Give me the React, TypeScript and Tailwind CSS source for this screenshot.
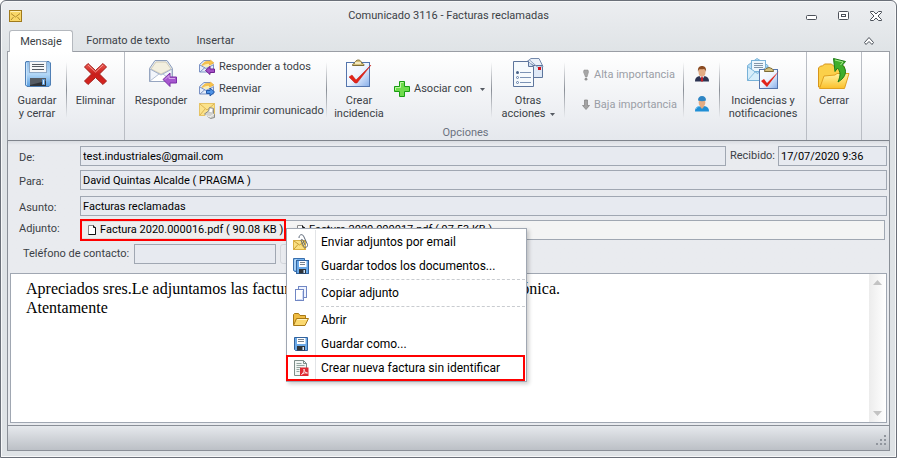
import type { ReactNode } from "react";

/* ---------- Iconos grandes (32px) ---------- */

function FloppyShape() {
  return (
    <>
      <path d="M5 3.500h23l1.500 1.500v22L28 28.500H6L4.500 27V4z" fill="url(#floppyBlue)" stroke="#4f7fb5" />
      <path d="M5.500 5v22" stroke="#c9e3fa" strokeWidth="1" />
      <rect x="8.500" y="3.500" width="17" height="11" fill="#f6f7f9" stroke="#8fa9c6" />
      <path d="M11 6.500h12M11 8.500h12M11 11.500h12" stroke="#555b63" />
      <rect x="9" y="20" width="16" height="8" fill="#2f3338" />
      <path d="M9 20h16v3L9 27z" fill="#555b63" />
      <rect x="21.500" y="21.500" width="2" height="5" fill="#d8ecff" stroke="#5f9bd8" />
    </>
  );
}

function SaveIcon() {
  return (
    <svg viewBox="0 0 32 32" className="size-8">
      <defs>
        <linearGradient id="floppyBlue" x1="0" y1="0" x2="0" y2="1">
          <stop offset="0" stopColor="#8fbce8" />
          <stop offset="0.500" stopColor="#b4d8f7" />
          <stop offset="1" stopColor="#5a9ee0" />
        </linearGradient>
      </defs>
      <FloppyShape />
    </svg>
  );
}

function DeleteIcon() {
  return (
    <svg viewBox="0 0 32 32" className="size-8">
      <defs>
        <linearGradient id="redCross" x1="0" y1="0" x2="0" y2="1">
          <stop offset="0" stopColor="#ee5a52" />
          <stop offset="0.500" stopColor="#c81e1a" />
          <stop offset="1" stopColor="#d8241f" />
        </linearGradient>
      </defs>
      <path
        d="M8 5.500l7.500 7L23 5.500l3.500 3.500-7 7 7 7L23 26.500l-7.500-7-7.500 7L4.500 23l7-7-7-7z"
        fill="url(#redCross)"
        stroke="#a31c18"
        strokeLinejoin="round"
      />
      <path d="M8 7l7.500 7L23 7" fill="none" stroke="#f59b95" />
    </svg>
  );
}

function ReplyIcon() {
  return (
    <svg viewBox="0 0 32 32" className="size-8">
      <path d="M4.500 10.500L10 2.500h12l5.500 8v13h-23z" fill="#e6ecf5" stroke="#8a9bb8" />
      <path d="M6 11l5-7h10l5 7-10 5z" fill="#f3efdf" stroke="#d3cdb8" />
      <path d="M5 11l11 6 11-6v12H5z" fill="#f2f5fb" stroke="#a2b0c8" />
      <path d="M5 23l9-7 2 1 2-1 9 7" fill="#fff" stroke="#b3bfd3" />
      <path d="M18 21.500l7-6.500v4h6.500v6H25v3.500z" fill="#a657cf" stroke="#7b2fa6" />
      <path d="M20 21.500l4-4v3h6" fill="none" stroke="#d6a8ec" />
    </svg>
  );
}

function ClipboardIcon() {
  return (
    <svg viewBox="0 0 32 32" className="size-8">
      <defs>
        <linearGradient id="paper" x1="0" y1="0" x2="1" y2="1">
          <stop offset="0" stopColor="#ffffff" />
          <stop offset="0.500" stopColor="#eef4ff" />
          <stop offset="1" stopColor="#86aeea" />
        </linearGradient>
      </defs>
      <rect x="3.500" y="4.500" width="23" height="24" fill="url(#paper)" stroke="#5475ad" />
      <path d="M9.500 7.500c0-2 1.500-2 2.500-2.500C12.500 1 18 1 18.500 5c1 .5 2.500.5 2.500 2.500z" fill="#d5c07b" stroke="#7d6b35" />
      <rect x="12" y="4" width="6" height="2" fill="#f3e9bf" />
      <path d="M6 19l3-2 4 5L28 7 14 25h-2z" fill="#e2231a" stroke="#c21810" strokeWidth=".5" strokeLinejoin="round" />
    </svg>
  );
}

function DocsIcon() {
  return (
    <svg viewBox="0 0 32 32" className="size-8">
      <path d="M15 3.500L19 .5h8l4 8-4 2z" fill="#eaf1fa" stroke="#7489ab" />
      <path d="M17.500 7.500h13v12h-13z" fill="#dfe9f6" stroke="#5d759c" />
      <path d="M17 1.500l9 8 5-1" fill="none" stroke="#8ba0c0" />
      <rect x="26" y="9" width="3" height="3" fill="#d4101c" />
      <path d="M1.500 3.500h15l5 5v20h-20z" fill="#f6fafd" stroke="#5d759c" />
      <path d="M16.500 3.500v5h5" fill="#cfdff2" stroke="#5d759c" />
      <path d="M8 14.500h11M8 19.500h11M8 24.500h11" stroke="#7c93b5" />
      <circle cx="5.500" cy="14.500" r="1.500" fill="#4a6388" />
      <circle cx="5.500" cy="19.500" r="1" fill="#fff" stroke="#5f7ba5" />
      <circle cx="5.500" cy="24.500" r="1" fill="#fff" stroke="#5f7ba5" />
    </svg>
  );
}

function NotificationsIcon() {
  return (
    <svg viewBox="0 0 32 32" className="size-8">
      <path d="M.5 7.500L10 .5l11 7v15H.5z" fill="#b9def5" stroke="#78b2d8" />
      <rect x="4.500" y="2.500" width="14" height="11" fill="#edf7fd" stroke="#78b2d8" />
      <path d="M7 5.500h9M7 7.500h9M7 9.500h9" stroke="#8396a8" />
      <path d="M.5 8.500l10 7 10-7v14H.5z" fill="#d7eefb" stroke="#78b2d8" />
      <path d="M1 22l7-8M20 22l-7-8" stroke="#8ec2e2" />
      <rect x="12.500" y="11.500" width="18" height="19" fill="url(#paper)" stroke="#5475ad" />
      <path d="M17.500 13.500c0-3 2-3 4.500-4 2.500 1 4.500 1 4.500 4z" fill="#d5c07b" stroke="#7d6b35" />
      <path d="M14 23l3-2 3 4L32 13 20 29z" fill="#e2231a" />
    </svg>
  );
}

function CloseFolderIcon() {
  return (
    <svg viewBox="0 0 32 32" className="size-8">
      <defs>
        <linearGradient id="folder" x1="0" y1="0" x2="0" y2="1">
          <stop offset="0" stopColor="#fff3a0" />
          <stop offset="1" stopColor="#fbc02a" />
        </linearGradient>
      </defs>
      <path d="M.5 29V10l2-2h2l2-2h7l2 2h10l1 1v20H2z" fill="#fbd04a" stroke="#d7951a" />
      <path d="M1.500 30.500L6 18l11-1 2-1.500h12L26.500 30.500z" fill="url(#folder)" stroke="#e0a01f" />
      <path d="M15.500.5l12 3-3 3.500c5 5 4 12-4.500 17 2.500-6 3-10-.5-14L17 13.500z" fill="#3fae2b" stroke="#1d7a16" />
      <path d="M17 2l8 2-2.500 3" fill="none" stroke="#a9ea8c" />
    </svg>
  );
}

/* ---------- Iconos pequeños (16px) ---------- */

function MailIcon() {
  return (
    <svg viewBox="0 0 14 12" className="h-3 w-3.5">
      <rect x=".5" y=".5" width="12" height="11" fill="#f9d768" stroke="#a07a1c" />
      <path d="M2 3.500l4.500 3.500L11 3.500M2 10l2.500-3M11 10L8.500 7" fill="none" stroke="#b28b2c" />
      <path d="M1.500 1.500h10" stroke="#fff0b8" />
    </svg>
  );
}

function OpenMail({ arrow }: { arrow: ReactNode }) {
  return (
    <svg viewBox="0 0 16 16" className="size-4 shrink-0">
      <path d="M.5 5.500L5 1.500h6l3.500 4v7.500H.5z" fill="#e5edfa" stroke="#7b92c4" />
      <path d="M2 6l4-3.500h4.500L13 6 8 8.500z" fill="#fdeeb0" />
      <path d="M1 13l5-4.500M1 6l6 3.500L14 6" fill="none" stroke="#7b92c4" />
      <path d="M3 6.500c2-4 5-5 8-4L11.500 1 15 4l-4.500 2V4.500C8 4 6 5 3 6.500z" fill="#f9c44a" stroke="#e2a02e" strokeWidth=".5" />
      {arrow}
    </svg>
  );
}

function ReplyAllIcon() {
  return <OpenMail arrow={<path d="M6.500 11.500l4.500-4V10h4.500v3.500H11v2z" fill="#a24fc4" stroke="#6f2391" />} />;
}

function ForwardIcon() {
  return <OpenMail arrow={<path d="M15.500 11L11 7v2.500H7.500v3H11v2.500z" fill="#4f93e6" stroke="#2259a8" />} />;
}

function PrintIcon() {
  return (
    <svg viewBox="0 0 16 16" className="size-4 shrink-0">
      <rect x=".5" y=".5" width="15" height="12" fill="#fbe28b" stroke="#e6c466" />
      <path d="M1 1l7 6 7-6M1 12l5-6" fill="none" stroke="#dcb453" />
      <path d="M5.500 11l4-3 1-3.500 4 1v5l1 1v3l-4 1z" fill="#d3d3cf" stroke="#8b8b87" />
      <path d="M9.500 9l1.500-4 3 1-1 4z" fill="#fff" stroke="#a6a6a2" strokeWidth=".5" />
      <path d="M6 12l5 2 4-3" fill="none" stroke="#f4f4f0" />
    </svg>
  );
}

function PlusIcon() {
  return (
    <svg viewBox="0 0 16 16" className="size-4 shrink-0">
      <path d="M5.500.5h5v5h5v5h-5v5h-5v-5h-5v-5h5z" fill="#6fdc4c" stroke="#199c12" />
      <path d="M6.500 6.500v-5h3M1.500 9V6.500h5" fill="none" stroke="#c0f7a4" />
    </svg>
  );
}

function HighIcon() {
  return (
    <svg viewBox="0 0 8 12" className="h-3 w-2">
      <path d="M2 1h4l.5 2L5 8H3.500L1.500 3z" fill="#a6a6a6" stroke="#858585" strokeWidth=".5" />
      <circle cx="4" cy="10.200" r="1.400" fill="#949494" />
    </svg>
  );
}

function LowIcon() {
  return (
    <svg viewBox="0 0 8 12" className="h-3 w-2">
      <path d="M2.500 1h3v5.500h2L4 10.500.5 6.500h2z" fill="#a3a3a3" stroke="#808080" strokeWidth=".7" />
    </svg>
  );
}

function ManagerIcon() {
  return (
    <svg viewBox="0 0 16 16" className="size-4">
      <path d="M1 15.500c0-4 2-5 5-5.500h4c3 .5 5 1.500 5 5.500z" fill="#2c3352" />
      <path d="M5.500 10L8 14l2.500-4z" fill="#e9edf5" />
      <path d="M7.300 10.500h1.400l.6 4L8 16l-1.300-1.500z" fill="#c41e26" />
      <ellipse cx="8" cy="6" rx="3.500" ry="4.500" fill="#e3ac84" />
      <path d="M4 6C3.500 2 5 0 8 0s4.500 2 4 6c-.5-2-1-2.500-2-3-2 .5-4 0-5 .5-.5.700-.8 1.500-1 2.500z" fill="#8a4b22" />
    </svg>
  );
}

function WorkerIcon() {
  return (
    <svg viewBox="0 0 16 16" className="size-4">
      <path d="M1 15.500c0-4 2-5 5-5.500h4c3 .5 5 1.500 5 5.500z" fill="#1f8fd6" />
      <path d="M5.500 10L8 13l2.500-3z" fill="#e0a880" />
      <path d="M2 13c1-2 2-2.500 4-2.500" fill="none" stroke="#72c3f2" />
      <ellipse cx="8" cy="6.500" rx="3.300" ry="4" fill="#e3ac84" />
      <path d="M4 4.500C4 1.500 5.500 0 8 0s4 1.500 4 4.500c-3 1-5 1-8 0z" fill="#2f86c4" />
    </svg>
  );
}

function MailClipIcon() {
  return (
    <svg viewBox="0 0 16 16" className="size-4">
      <rect x=".5" y="6.500" width="12" height="9" fill="#fbe081" stroke="#dbb044" />
      <path d="M1 7l5.500 4L12 7M1 15l4-4.500M12 15L8.500 10.500" fill="none" stroke="#c79d35" />
      <path d="M6 4c0-4 4-4.500 5-1l3.500 7.500c.5 3-3 4-4 1.500L8 6.500c0-1.500 1.500-1.500 2 0l2 4.500" fill="none" stroke="#5d6878" />
    </svg>
  );
}

function SaveAllIcon() {
  return (
    <svg viewBox="0 0 16 16" className="size-4">
      <path d="M.5.5h11v13H2l-1.500-1z" fill="#77b4ee" stroke="#3a6fad" />
      <path d="M2 12V2h2" fill="none" stroke="#d4e9fc" />
      <rect x="3.500" y="2.500" width="12" height="13" fill="#6aa9e8" stroke="#31639e" />
      <rect x="6" y="3" width="7.500" height="6" fill="#fff" />
      <path d="M7 4.500h5M7 6.500h5" stroke="#7b8591" />
      <rect x="6" y="11" width="7" height="4.500" fill="#2f3338" />
      <rect x="10.500" y="12" width="1.500" height="3" fill="#c8e2fb" />
    </svg>
  );
}

function CopyIcon() {
  return (
    <svg viewBox="0 0 16 16" className="size-4">
      <rect x="5.500" y="1.500" width="8" height="11" fill="#eef3ff" stroke="#7187c4" />
      <rect x="2.500" y="4.500" width="8" height="11" fill="#fff" stroke="#7187c4" />
      <path d="M9.500 6v8.500H4" fill="none" stroke="#cfdaf6" />
    </svg>
  );
}

function OpenIcon() {
  return (
    <svg viewBox="0 0 16 16" className="size-4">
      <path d="M.5 13V2.500l1-1h4l1.500 2h5.500V7" fill="#f0bc42" stroke="#a87916" />
      <path d="M.5 13.500l3-7h12l-3.500 7z" fill="#fbd970" stroke="#a87916" />
      <path d="M4.200 7.500h9.800" stroke="#fff3c2" />
    </svg>
  );
}

function SaveAsIcon() {
  return (
    <svg viewBox="0 0 16 16" className="size-4">
      <path d="M1.500 1.500h13v13h-12l-1-1z" fill="#6aa9e8" stroke="#31639e" />
      <rect x="4" y="2" width="8.500" height="6" fill="#fff" />
      <path d="M5 3.500h6M5 5.500h6" stroke="#7b8591" />
      <rect x="4" y="10" width="8" height="4.500" fill="#2f3338" />
      <rect x="9.500" y="11" width="1.500" height="3" fill="#c8e2fb" />
    </svg>
  );
}

function PdfIcon() {
  return (
    <svg viewBox="0 0 16 16" className="size-4">
      <path d="M1.500.5h9l3 3v12h-12z" fill="#f2f6f4" stroke="#7d8d89" />
      <path d="M10.500.5v3h3" fill="none" stroke="#7d8d89" />
      <path d="M3.500 3.500h5M3.500 5.500h8M3.500 7.500h4M3.500 9.500h3M3.500 11.500h3" stroke="#93a5a0" />
      <rect x="7" y="7.500" width="8.500" height="8.500" fill="#df2a33" />
      <path d="M8.500 14.500c2-1.500 3-3.500 2.500-5.500 0 2.500 1.500 4 3.500 4-2-.5-4 0-6 1.500z" fill="none" stroke="#fff" strokeWidth=".8" />
    </svg>
  );
}

function PageIcon() {
  return (
    <svg viewBox="0 0 8 10" className="h-2.5 w-2 shrink-0">
      <path d="M.5.5h5l2 2v7h-7z" fill="#fff" stroke="#8a8a8a" />
      <path d="M5.500.5v2h2v7H.5" fill="none" stroke="#111" />
    </svg>
  );
}

function Caret() {
  return (
    <svg viewBox="0 0 5 3" className="ml-1 inline-block h-[3px] w-[5px] shrink-0 align-middle">
      <path d="M0 0h5L2.500 3z" fill="#555a62" />
    </svg>
  );
}

/* ---------- Cinta ---------- */

function BigButton({ icon, width, children }: { icon: ReactNode; width: string; children: ReactNode }) {
  return (
    <button type="button" className={`flex shrink-0 flex-col items-center gap-1 pt-1.5 text-center ${width}`}>
      {icon}
      <span className="leading-[13px] whitespace-nowrap">{children}</span>
    </button>
  );
}

function SmallButton({ icon, children }: { icon: ReactNode; children: ReactNode }) {
  return (
    <button type="button" className="flex h-[22px] items-center gap-1 whitespace-nowrap">
      {icon}
      {children}
    </button>
  );
}

function Divider() {
  return <div className="mt-2.5 h-14 w-px shrink-0 bg-linear-to-b from-transparent via-[#8a8f97] to-transparent" />;
}

function Ribbon() {
  return (
    <div className="flex h-[90px] overflow-hidden border border-[#9a9ea5] border-b-[#7f848c] bg-linear-to-b from-white to-[#e5e8ed]">
      <div className="flex shrink-0 border-r border-[#b9bdc4]">
        <BigButton icon={<SaveIcon />} width="w-[58px]">
          Guardar
          <br />y cerrar
        </BigButton>
        <Divider />
        <BigButton icon={<DeleteIcon />} width="w-[57px]">
          Eliminar
        </BigButton>
      </div>

      <div className="flex shrink-0 flex-col border-r border-[#b9bdc4]">
        <div className="flex h-[74px]">
          <BigButton icon={<ReplyIcon />} width="w-[72px]">
            Responder
          </BigButton>
          <div className="flex w-[129px] shrink-0 flex-col pt-1 pl-0.5">
            <SmallButton icon={<ReplyAllIcon />}>Responder a todos</SmallButton>
            <SmallButton icon={<ForwardIcon />}>Reenviar</SmallButton>
            <SmallButton icon={<PrintIcon />}>Imprimir comunicado</SmallButton>
          </div>
          <Divider />
          <BigButton icon={<ClipboardIcon />} width="w-16">
            Crear
            <br />
            incidencia
          </BigButton>
          <div className="flex w-[100px] shrink-0 flex-col items-start justify-center pl-[3px]">
            <SmallButton icon={<PlusIcon />}>
              Asociar con
              <Caret />
            </SmallButton>
          </div>
          <Divider />
          <BigButton icon={<DocsIcon />} width="w-[72px]">
            Otras
            <br />
            acciones
            <Caret />
          </BigButton>
          <Divider />
          <div className="flex w-[118px] shrink-0 flex-col gap-2 pt-3 pl-[17px] text-[#9a9ea6]">
            <SmallButton icon={<HighIcon />}>Alta importancia</SmallButton>
            <SmallButton icon={<LowIcon />}>Baja importancia</SmallButton>
          </div>
          <Divider />
          <div className="flex w-[35px] shrink-0 flex-col items-center gap-3.5 pt-3.5">
            <button type="button" aria-label="Responsable">
              <ManagerIcon />
            </button>
            <button type="button" aria-label="Operario">
              <WorkerIcon />
            </button>
          </div>
          <Divider />
          <BigButton icon={<NotificationsIcon />} width="w-[86px]">
            Incidencias y
            <br />
            notificaciones
          </BigButton>
        </div>
        <div className="text-center leading-[13px] text-[#6b7280]">Opciones</div>
      </div>

      <div className="flex shrink-0 border-r border-[#b9bdc4]">
        <BigButton icon={<CloseFolderIcon />} width="w-[54px]">
          Cerrar
        </BigButton>
      </div>
    </div>
  );
}

/* ---------- Formulario ---------- */

const fieldClass = "h-5 border border-[#a0a7b2] bg-[#e7eaf0] px-0.5 text-black outline-none";

function Field({ id, label, value }: { id: string; label: string; value: string }) {
  return (
    <div className="flex min-w-0 flex-1">
      <label htmlFor={id} className="w-[61px] shrink-0 pt-[5px]">
        {label}
      </label>
      <input id={id} readOnly defaultValue={value} className={`min-w-0 flex-1 ${fieldClass}`} />
    </div>
  );
}

function MenuItem({ icon, marked, children }: { icon: ReactNode; marked?: boolean; children: ReactNode }) {
  return (
    <button type="button" role="menuitem" className="relative flex h-6 w-full items-center text-left whitespace-nowrap">
      <span className="flex h-full w-[29px] shrink-0 items-center justify-center border-r border-[#e2e4e7]">{icon}</span>
      <span className="pl-[5px]">{children}</span>
      {marked && <span className="absolute -inset-y-px right-0 -left-px border-2 border-[#ff0000]" />}
    </button>
  );
}

function MenuSeparator() {
  return (
    <div role="separator" className="flex h-[3px] items-center">
      <div className="h-full w-[29px] border-r border-[#e2e4e7]" />
      <div className="ml-[5px] flex-1 border-t border-dashed border-[#c9ccd0]" />
    </div>
  );
}

function AttachmentMenu() {
  return (
    <div
      role="menu"
      className="absolute top-[7px] left-full z-10 ml-px w-[241px] border border-[#a0a7b2] bg-white p-px pl-0 text-[12px] text-black shadow-[2px_2px_4px_rgba(0,0,0,0.2)]"
    >
      <MenuItem icon={<MailClipIcon />}>Enviar adjuntos por email</MenuItem>
      <MenuItem icon={<SaveAllIcon />}>Guardar todos los documentos...</MenuItem>
      <MenuSeparator />
      <MenuItem icon={<CopyIcon />}>Copiar adjunto</MenuItem>
      <MenuSeparator />
      <MenuItem icon={<OpenIcon />}>Abrir</MenuItem>
      <MenuItem icon={<SaveAsIcon />}>Guardar como...</MenuItem>
      <MenuItem icon={<PdfIcon />} marked>
        Crear nueva factura sin identificar
      </MenuItem>
    </div>
  );
}

function Attachments() {
  return (
    <div className="mr-0.5 flex">
      <span className="w-[61px] shrink-0 pt-0.5">Adjunto:</span>
      <div className="flex h-5 min-w-0 flex-1 border border-[#a0a7b2] bg-[#f4f4f4] text-black">
        <div className="relative w-[204px] shrink-0">
          <button
            type="button"
            className="flex h-full w-full items-center gap-1 border border-[#dcdcdc] bg-[#eeeeee] pl-1.5 whitespace-nowrap"
          >
            <PageIcon />
            Factura 2020.000016.pdf ( 90.08 KB )
          </button>
          <span className="pointer-events-none absolute -inset-x-px -inset-y-0.5 border-2 border-[#ff0000]" />
          <AttachmentMenu />
        </div>
        <button type="button" className="ml-1.5 flex items-center gap-1 pl-1.5 whitespace-nowrap">
          <PageIcon />
          Factura 2020.000017.pdf ( 97.53 KB )
        </button>
      </div>
    </div>
  );
}

function Scrollbar() {
  return (
    <div className="flex w-[17px] shrink-0 flex-col items-center justify-between bg-linear-to-r from-[#ececec] to-white py-1.5">
      <svg viewBox="0 0 9 5" className="h-[5px] w-[9px]">
        <path d="M0 5h9L4.500 0z" fill="#c3c3c3" />
      </svg>
      <svg viewBox="0 0 9 5" className="h-[5px] w-[9px]">
        <path d="M0 0h9L4.500 5z" fill="#c3c3c3" />
      </svg>
    </div>
  );
}

const message =
  "Apreciados sres.Le adjuntamos las facturas emitidas del mes en factura electrónica.\nAtentamente";

export default function App() {
  return (
    <div className="flex min-h-screen flex-col rounded-t-md border border-[#6b7079] bg-linear-to-b from-[#eceef1] to-[#dfe3e6] to-[52px] px-1.5 pb-1.5 font-[Roboto,sans-serif] text-[11px] leading-[14px] text-[#3b3f46] shadow-[inset_0_0_0_1px_#f7f8f9]">
      {/* Barra de título */}
      <header className="flex h-[29px] items-center">
        <div className="flex w-20 pl-0.5">
          <MailIcon />
        </div>
        <h1 className="flex-1 text-center">Comunicado 3116 - Facturas reclamadas</h1>
        <div className="flex w-20 items-center justify-end gap-5 pr-2">
          <button type="button" aria-label="Minimizar">
            <svg viewBox="0 0 12 12" className="size-3">
              <rect x=".5" y="5.500" width="10" height="4" rx="1" fill="#fff" stroke="#4b5059" />
            </svg>
          </button>
          <button type="button" aria-label="Maximizar">
            <svg viewBox="0 0 12 12" className="size-3">
              <rect x=".5" y="1.500" width="10" height="8" rx="1" fill="#fff" stroke="#4b5059" />
              <rect x="3.500" y="4.500" width="4" height="2" fill="#fff" stroke="#4b5059" />
            </svg>
          </button>
          <button type="button" aria-label="Cerrar ventana">
            <svg viewBox="0 0 12 12" className="size-3">
              <path
                d="M.5 1.500h3L6 4l2.500-2.500h3v1L8 6l3.500 3.500v1h-3L6 8l-2.500 2.500h-3v-1L4 6 .5 2.500z"
                fill="#fff"
                stroke="#4b5059"
              />
            </svg>
          </button>
        </div>
      </header>

      {/* Pestañas */}
      <nav className="flex h-[21px] items-stretch pl-0.5">
        <button
          type="button"
          className="relative z-10 -mb-px w-16 rounded-t-[3px] border border-b-0 border-[#b4b8be] bg-white"
        >
          Mensaje
        </button>
        <button type="button" className="w-[110px]">
          Formato de texto
        </button>
        <button type="button" className="w-[65px]">
          Insertar
        </button>
        <button type="button" aria-label="Contraer la cinta" className="mr-4 ml-auto">
          <svg viewBox="0 0 10 8" className="h-2 w-2.5">
            <path d="M.5 5.500L5 .5l4.500 5-1.500 2-3-3-3 3z" fill="#fff" stroke="#4b5059" strokeLinejoin="round" />
          </svg>
        </button>
      </nav>

      <Ribbon />

      <main className="flex flex-1 flex-col border-x border-b border-[#8a8f97] bg-[#e9ebef]">
        <form className="flex flex-1 flex-col bg-linear-to-b from-[#d9dce1] to-[#e9ebef] to-[4px] pt-[5px] pr-0.5 pb-0.5 pl-0.5">
          <div className="flex flex-col gap-1 pl-[9px]">
            <div className="flex">
              <Field id="de" label="De:" value="test.industriales@gmail.com" />
              <label htmlFor="recibido" className="w-[52px] shrink-0 pt-[3px] pl-1">
                Recibido:
              </label>
              <input
                id="recibido"
                readOnly
                defaultValue="17/07/2020 9:36"
                className={`w-[109px] shrink-0 ${fieldClass}`}
              />
            </div>
            <Field id="para" label="Para:" value="David Quintas Alcalde ( PRAGMA )" />
            <div className="flex pt-0.5">
              <Field id="asunto" label="Asunto:" value="Facturas reclamadas" />
            </div>
            <Attachments />
            <div className="flex">
              <label htmlFor="telefono" className="w-[115px] shrink-0 pt-[3px] pl-1 whitespace-nowrap">
                Teléfono de contacto:
              </label>
              <input id="telefono" className={`w-[142px] ${fieldClass}`} />
              <button
                type="button"
                aria-label="Llamar"
                className="ml-1 w-6 rounded-[3px] border border-[#d3d6db]"
              />
            </div>
          </div>

          <div className="mt-[9px] flex min-h-[150px] flex-1 border border-[#a0a7b2] bg-white">
            <textarea
              aria-label="Mensaje"
              readOnly
              defaultValue={message}
              className="flex-1 resize-none overflow-hidden pt-[5px] pl-[15px] font-['Liberation_Serif',serif] text-[16px] leading-[19px] text-black outline-none"
            />
            <Scrollbar />
          </div>
        </form>

        {/* Barra de estado */}
        <footer className="flex h-[25px] items-end justify-end border-t border-[#8a8f97] bg-linear-to-b from-[#e6e9ed] to-[#bcc0c6] p-1 pr-0.5">
          <svg viewBox="0 0 12 12" className="size-3">
            <path d="M9 1h2v2H9zM5 5h2v2H5zM9 5h2v2H9zM1 9h2v2H1zM5 9h2v2H5zM9 9h2v2H9z" fill="#90959d" />
          </svg>
        </footer>
      </main>
    </div>
  );
}
